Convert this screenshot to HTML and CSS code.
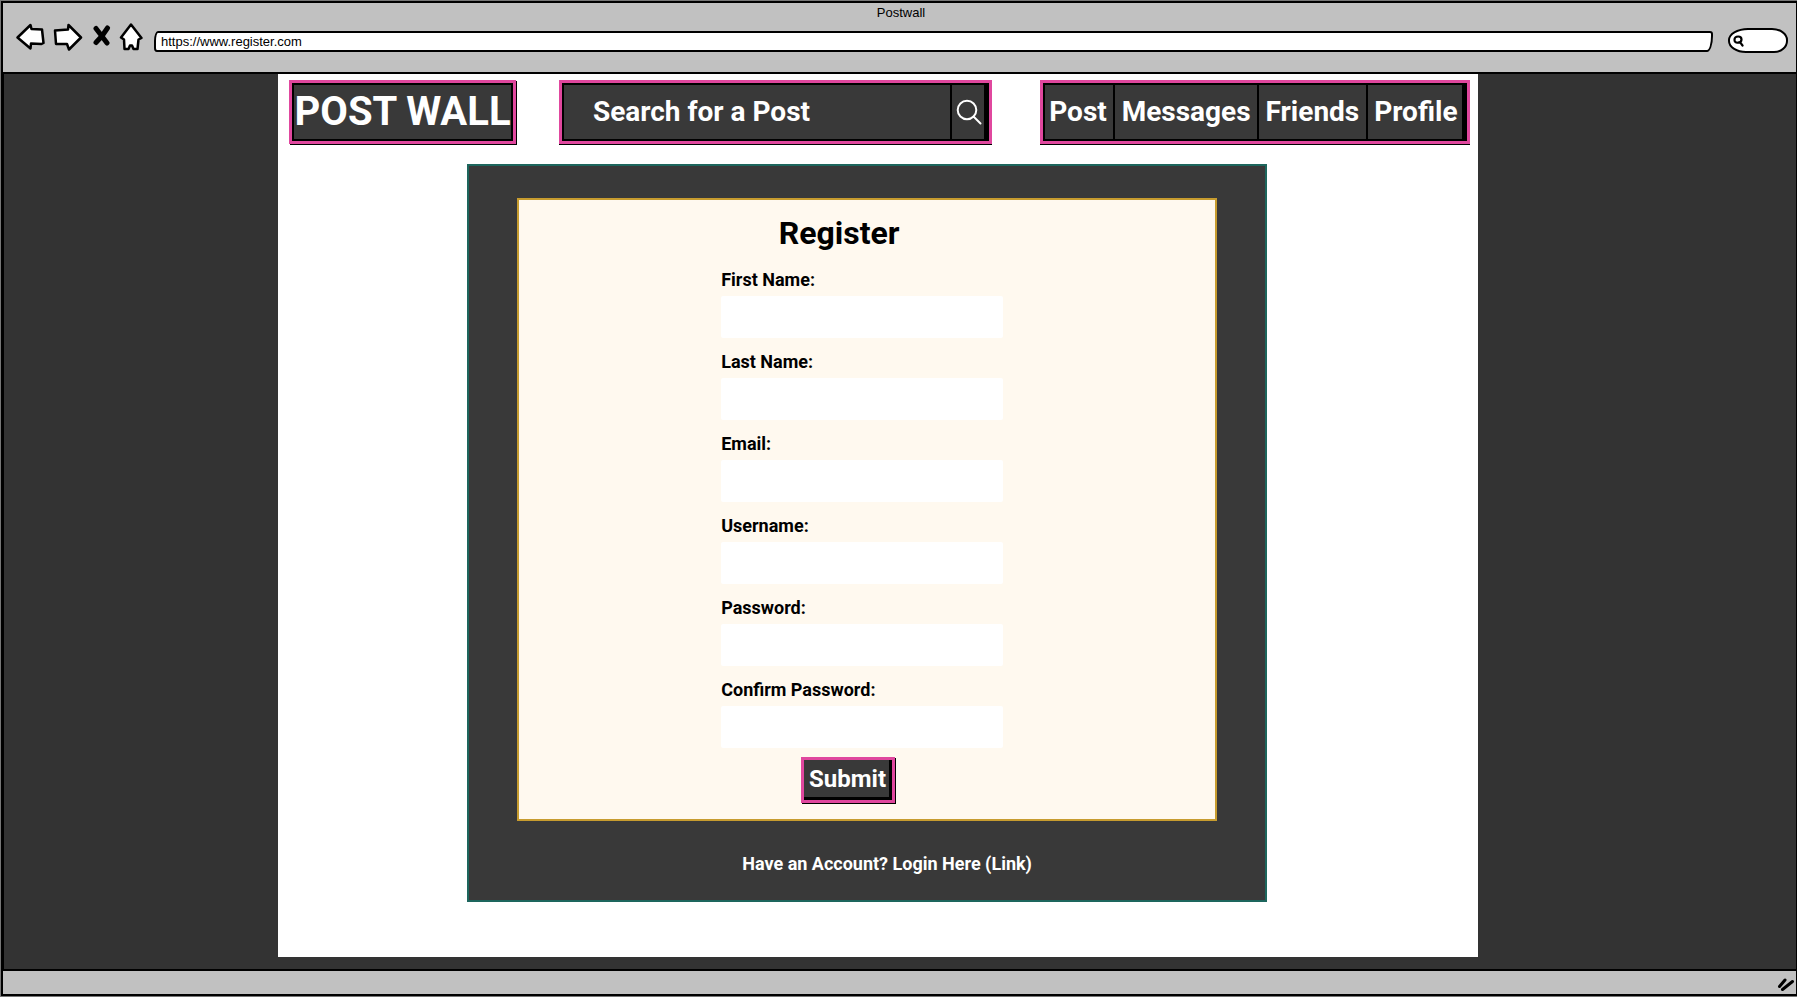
FILE: index.html
```html
<!DOCTYPE html>
<html lang="en">
<head>
<meta charset="utf-8">
<title>Postwall</title>
<link rel="stylesheet" href="styles.css">
</head>
<body>
<div class="window">
  <header class="chrome">
    <div class="chrome-title">Postwall</div>
    <div class="chrome-row">
      <div class="chrome-buttons">
        <button class="tool tool-back" type="button" aria-label="Back"><svg width="29" height="28" viewBox="0 0 29 28"><path d="M1.5 14.5 L14.5 2 L15.5 6 L26 6.5 L27.5 20 L25.500 21 L15 20.500 L14.500 25.500 Z"/></svg></button>
        <button class="tool tool-forward" type="button" aria-label="Forward"><svg width="30" height="28" viewBox="0 0 30 28"><path d="M2 7.500 L15 6.500 L15.500 2 L28 14.500 L16 26.500 L14 21 L3 21 Z"/></svg></button>
        <button class="tool tool-stop" type="button" aria-label="Stop"><svg width="18" height="28" viewBox="0 0 18 28"><path class="cross" d="M3 5.500 L8 12 L14 20 M14.500 5 L9 13 L3 19.500"/></svg></button>
        <button class="tool" type="button" aria-label="Home"><svg width="24" height="28" viewBox="0 0 24 28"><path d="M12 1.500 L2 14.500 L5 16.500 L5.500 26 L9.500 26 L11 22.500 L13 22.500 L14.500 26 L18.500 26 L19.500 16.500 L22.500 15 Z"/></svg></button>
      </div>
      <input class="address" type="text" aria-label="Address" value="https://www.register.com">
      <label class="quick">
        <svg width="12" height="12" viewBox="0 0 12 12"><path d="M8.500 4.500 C8.500 2.500 7 1.500 5.200 1.500 C3 1.500 1.500 3 1.500 5 C1.500 7 3 8 5 7.700 C7.500 7.500 8.500 6.500 8.500 4.500 Z M7 7.200 L9.500 10.500"/></svg>
        <input type="text" aria-label="Browser search">
      </label>
    </div>
  </header>

  <div class="viewport">
    <main class="page">
      <div class="topbar">
        <a class="sketch logo" href="#">POST WALL</a>
        <form class="sketch search">
          <input type="text" aria-label="Search for a Post" placeholder="Search for a Post">
          <button type="button" aria-label="Search"><svg width="26" height="26" viewBox="0 0 26 26"><circle cx="11" cy="11" r="9.300"/><path d="M17.500 17.500 L24.500 24.500"/></svg></button>
        </form>
        <nav class="sketch menu">
          <a href="#">Post</a>
          <a href="#">Messages</a>
          <a href="#">Friends</a>
          <a href="#">Profile</a>
        </nav>
      </div>

      <section class="panel">
        <div class="card">
          <form class="register">
            <h1>Register</h1>
            <div class="fields">
              <label class="field">First Name:<input type="text"></label>
              <label class="field">Last Name:<input type="text"></label>
              <label class="field">Email:<input type="email"></label>
              <label class="field">Username:<input type="text"></label>
              <label class="field">Password:<input type="password"></label>
              <label class="field">Confirm Password:<input type="password"></label>
            </div>
            <button class="sketch submit" type="button">Submit</button>
          </form>
        </div>
        <p class="login"><a href="#">Have an Account? Login Here (Link)</a></p>
      </section>
    </main>
  </div>

  <footer class="statusbar">
    <svg width="18" height="14" viewBox="0 0 18 14"><path d="M2.500 8.500 L8 2 M5.500 11.500 L15.500 3.500"/></svg>
  </footer>
</div>
</body>
</html>
```

FILE: styles.css
```css
* { box-sizing: border-box; }

body {
  margin: 0;
  background: #777;
  color: #000;
  font-family: Roboto, "Liberation Sans", sans-serif;
}

a { color: inherit; text-decoration: none; }

button, input { font: inherit; color: inherit; margin: 0; padding: 0; }

svg { display: block; flex: none; }

.window {
  display: flex;
  flex-direction: column;
  min-height: 100vh;
  padding: 1px 0 1px 1px;
}

/* Browser frame */
.chrome {
  background: #c1c1c1;
  border: solid #000;
  border-width: 2px 1px 2px 2px;
  padding: 0 8px 19px 13px;
  font-family: "Liberation Sans", Arial, sans-serif;
  font-size: 13px;
}

.chrome-title { padding-right: 2px; line-height: 20px; text-align: center; }

.chrome-row { display: flex; align-items: flex-end; height: 30px; }

.chrome-buttons { display: flex; align-self: flex-start; margin-right: 11px; }

.tool { border: 0; background: none; }
.tool-back { margin-right: 8px; }
.tool-forward { margin-right: 10px; }
.tool-stop { margin-right: 8px; }

.tool path {
  fill: #fff;
  stroke: #000;
  stroke-width: 2.5;
  stroke-linejoin: round;
}

.tool .cross { fill: none; stroke-width: 5; stroke-linecap: round; }

.address {
  flex: 1;
  min-width: 0;
  height: 21px;
  margin: 0 15px 1px 0;
  padding: 0 5px;
  border: 2px solid #000;
  border-radius: 4px 3px 6px 3px / 10px 3px 16px 4px;
  background: #fff;
}

.quick {
  display: flex;
  align-items: center;
  width: 60px;
  height: 25px;
  padding-left: 3px;
  border: 2px solid #000;
  border-radius: 20px 16px 14px 18px / 12px 12px 12px 12px;
  background: #fff;
}

.quick input { width: 36px; border: 0; background: none; }

.quick path { fill: none; stroke: #000; stroke-width: 2.2; stroke-linecap: round; }

.viewport {
  flex: 1;
  display: grid;
  grid-template-columns: 274fr 1200fr 318fr;
  padding-bottom: 12px;
  background: #333;
  border: solid #000;
  border-width: 0 1px 0 3px;
}

.statusbar {
  display: flex;
  justify-content: flex-end;
  align-items: flex-end;
  height: 27px;
  padding: 0 1px 2px 0;
  background: #c1c1c1;
  border: solid #000;
  border-width: 2px 1px 2px 2px;
}

.statusbar path { fill: none; stroke: #000; stroke-width: 3; stroke-linecap: round; }

/* Page */
.page {
  grid-column: 2;
  padding: 6px 8px 52px 11px;
  background: #fff;
}

.topbar {
  display: grid;
  grid-template-columns: 228fr 43fr 430fr 48fr 432fr;
  height: 64px;
  margin-bottom: 20px;
}

.sketch {
  border: 3px solid #e0479e;
  background: #393939;
  color: #fff;
  font-weight: 700;
  box-shadow: inset 0 0 0 2px #000, 1px 1px 0 #000;
}

.logo {
  display: flex;
  align-items: center;
  justify-content: center;
  padding-bottom: 2px;
  font-size: 40px;
  white-space: nowrap;
}

.search, .menu {
  display: flex;
  padding-right: 3px;
  font-size: 28px;
  box-shadow: inset 0 0 0 2px #000, inset -5px 0 0 #000, 0 1px 0 #000;
}

.search { grid-column: 3; }
.menu { grid-column: 5; }

.search input {
  flex: 1;
  min-width: 0;
  padding: 0 0 2px 31px;
  border: 0;
  background: none;
}

.search input::placeholder { color: #fff; opacity: 1; }

.search button {
  display: flex;
  align-items: center;
  justify-content: center;
  width: 36px;
  border: 0;
  border-left: 2px solid #000;
  background: none;
}

.search svg { fill: none; stroke: #fff; stroke-width: 2; stroke-linecap: round; }

.menu a {
  display: flex;
  flex: auto;
  align-items: center;
  justify-content: center;
  padding-bottom: 2px;
}

.menu a + a { border-left: 2px solid #000; }

.panel {
  width: 67.700%;
  margin-left: 15.100%;
  padding: 32px 48px 0;
  border: 2px solid #1d665d;
  background: #393939;
}

.card {
  display: grid;
  grid-template-columns: 202fr 282fr 212fr;
  padding: 13px 0 16px;
  border: 2px solid #c79c2f;
  background: #fff9ef;
}

.register {
  grid-column: 2;
  display: flex;
  flex-direction: column;
}

h1 {
  margin: 0 46px 15px 0;
  font-size: 32px;
  font-weight: 700;
  line-height: 40px;
  text-align: center;
}

.fields { display: grid; gap: 12px; }

.field {
  display: block;
  font-size: 18px;
  font-weight: 700;
  line-height: 24px;
}

.field input {
  display: block;
  width: 100%;
  height: 42px;
  margin-top: 4px;
  padding: 0 8px;
  border: 0;
  border-radius: 2px;
  background: #fff;
}

.submit {
  align-self: center;
  height: 46px;
  margin: 9px 28px 0 0;
  padding: 0 6px 2px 5px;
  font-size: 24px;
  box-shadow: inset -3px -3px 0 #000, 1px 1px 0 #000;
}

.login {
  margin: 0;
  padding: 31px 0 24px 40px;
  color: #fff;
  font-size: 18px;
  font-weight: 700;
  line-height: 24px;
  text-align: center;
}
```
